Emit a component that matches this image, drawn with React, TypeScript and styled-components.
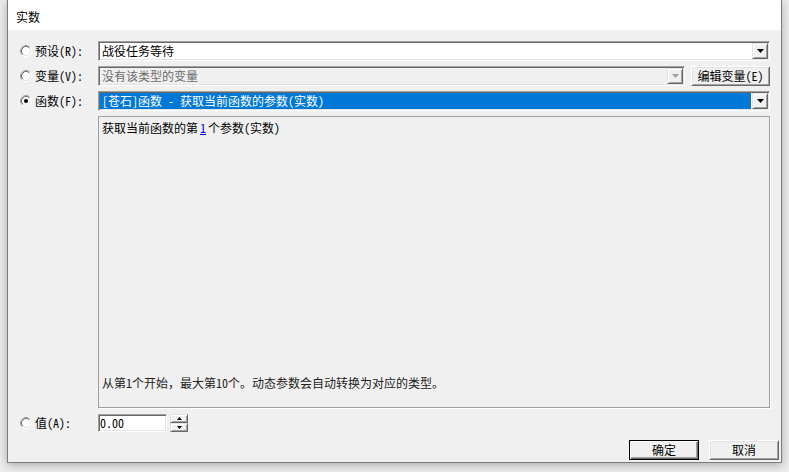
import React from "react";
import styled, { createGlobalStyle } from "styled-components";

const GlobalStyle = createGlobalStyle`
  html, body { margin: 0; padding: 0; background: #ececec; }
  body {
    font-family: "Noto Sans Mono CJK SC", "Noto Sans CJK SC", "Noto Sans", sans-serif;
    font-size: 12px;
    color: #000;
  }
  #root { width: 789px; height: 472px; overflow: hidden; }
  * { box-sizing: border-box; }
`;

const Desktop = styled.div`
  width: 789px;
  height: 472px;
  padding-left: 7px;
  background: #ececec;
`;

const Dialog = styled.div`
  width: 775px;
  height: 463px;
  border: 1px solid #7a7a7a;
  border-top: none;
  background: #f0f0f0;
  box-shadow: 0 2px 9px rgba(0, 0, 0, 0.28);
  display: flex;
  flex-direction: column;
`;

const TitleBar = styled.div`
  height: 30px;
  flex: none;
  background: #fff;
  padding: 3px 0 0 8px;
  display: flex;
  align-items: center;
  font-family: "Noto Sans CJK SC", sans-serif;
  font-size: 12px;
  color: #000;
`;

const Body = styled.div`
  flex: 1;
  padding: 11px 2px 1px 12px;
  display: flex;
  flex-direction: column;
`;

const FormGrid = styled.div`
  display: grid;
  grid-template-columns: 78px 1fr;
  grid-template-rows: 20px 20px 20px 292px 18px;
  row-gap: 5px;
  margin-right: 9px;
`;

const OptionLabel = styled.label<{ $offset?: number }>`
  display: flex;
  align-items: center;
  gap: 3px;
  font-size: 12px;
  line-height: 14px;
  white-space: nowrap;
  margin-top: ${(p) => p.$offset ?? 0}px;
`;

const ControlRow = styled.div`
  display: flex;
  gap: 6px;
  align-items: stretch;
`;

const sunken = `
  border-style: solid;
  border-width: 1px;
  border-color: #a0a0a0 #ffffff #ffffff #a0a0a0;
  box-shadow: inset 1px 1px 0 #696969, inset -1px -1px 0 #e3e3e3;
  padding: 1px;
`;

const Combo = styled.div<{ $disabled?: boolean }>`
  flex: 1;
  height: 20px;
  display: flex;
  align-items: stretch;
  ${sunken}
  background: ${(p) => (p.$disabled ? "#f0f0f0" : "#ffffff")};
`;

const ComboText = styled.div<{ $selected?: boolean; $disabled?: boolean }>`
  flex: 1;
  display: flex;
  align-items: center;
  padding-left: 2px;
  margin-right: 1px;
  font-size: 12px;
  line-height: 14px;
  white-space: pre;
  overflow: hidden;
  background: ${(p) => (p.$selected ? "#0078d7" : "transparent")};
  color: ${(p) => (p.$selected ? "#fff" : p.$disabled ? "#6d6d6d" : "#000")};
`;

const raised = `
  border-style: solid;
  border-width: 1px;
  border-color: #e3e3e3 #696969 #696969 #e3e3e3;
  box-shadow: inset 1px 1px 0 #ffffff, inset -1px -1px 0 #a0a0a0;
  background: #f0f0f0;
`;

const DropButton = styled.div`
  width: 16px;
  height: 16px;
  flex: none;
  ${raised}
  display: flex;
  align-items: center;
  justify-content: center;
`;

const PushButton = styled.button<{ $width: number; $default?: boolean }>`
  width: ${(p) => p.$width}px;
  height: 20px;
  padding: 0;
  font-family: inherit;
  font-size: 12px;
  line-height: 14px;
  color: #000;
  background: #f0f0f0;
  border-style: solid;
  border-width: 1px;
  border-color: ${(p) =>
    p.$default ? "#000 #000 #000 #000" : "#ffffff #696969 #696969 #ffffff"};
  box-shadow: ${(p) =>
    p.$default
      ? "inset 1px 1px 0 #ffffff, inset -1px -1px 0 #696969, inset -2px -2px 0 #a0a0a0"
      : "inset 1px 1px 0 #e3e3e3, inset -1px -1px 0 #a0a0a0"};
  display: flex;
  align-items: center;
  justify-content: center;
  flex: none;
`;

const DescBox = styled.div`
  border: 1px solid #a0a0a0;
  box-shadow: 1px 1px 0 #ffffff;
  background: #f0f0f0;
  padding: 3px 3px 16px 3px;
  display: flex;
  flex-direction: column;
  justify-content: space-between;
  font-size: 12px;
  line-height: 16px;
`;

const DescText = styled.div<{ $muted?: boolean }>`
  color: ${(p) => (p.$muted ? "#222" : "#000")};
  white-space: nowrap;
`;

const ParamLink = styled.span`
  color: #0000ee;
  text-decoration: underline;
  padding: 0 2px;
`;

const ValueRow = styled.div`
  display: flex;
  gap: 3px;
  margin-top: 1px;
`;

const NumberInput = styled.div`
  width: 69px;
  height: 18px;
  ${sunken}
  background: #fff;
  display: flex;
  align-items: center;
  font-size: 12px;
  line-height: 14px;
  padding-left: 1px;
`;

const Spinner = styled.div`
  width: 18px;
  height: 18px;
  display: flex;
  flex-direction: column;
`;

const SpinHalf = styled.div`
  flex: 1;
  ${raised}
  display: flex;
  align-items: center;
  justify-content: center;
`;

const ButtonRow = styled.div`
  display: flex;
  justify-content: flex-end;
  gap: 10px;
  margin-top: 9px;
`;

const Radio: React.FC<{ checked?: boolean }> = ({ checked }) => (
  <svg width="12" height="12" viewBox="0 0 12 12" style={{ flex: "none" }}>
    <circle cx="6" cy="6" r="4.5" fill="#fff" />
    <path d="M2.11 9.89 A5.5 5.5 0 0 1 9.89 2.11" fill="none" stroke="#a0a0a0" strokeWidth="1" />
    <path d="M9.89 2.11 A5.5 5.5 0 0 1 2.11 9.89" fill="none" stroke="#ffffff" strokeWidth="1" />
    <path d="M2.82 9.18 A4.5 4.5 0 0 1 9.18 2.82" fill="none" stroke="#696969" strokeWidth="1" />
    <path d="M9.18 2.82 A4.5 4.5 0 0 1 2.82 9.18" fill="none" stroke="#e3e3e3" strokeWidth="1" />
    {checked && <circle cx="6" cy="6" r="2" fill="#000" />}
  </svg>
);

const DownArrow: React.FC<{ disabled?: boolean }> = ({ disabled }) => (
  <svg width="7" height="4" viewBox="0 0 7 4">
    <polygon points="0,0 7,0 3.5,4" fill={disabled ? "#a0a0a0" : "#000"} />
  </svg>
);

const SmallArrow: React.FC<{ up?: boolean }> = ({ up }) => (
  <svg width="5" height="3" viewBox="0 0 5 3">
    <polygon points={up ? "0,3 5,3 2.5,0" : "0,0 5,0 2.5,3"} fill="#000" />
  </svg>
);

export default function App() {
  return (
    <>
      <GlobalStyle />
      <Desktop>
        <Dialog>
          <TitleBar>实数</TitleBar>
          <Body>
            <FormGrid>
              <OptionLabel>
                <Radio />
                预设(R):
              </OptionLabel>
              <ControlRow>
                <Combo>
                  <ComboText>战役任务等待</ComboText>
                  <DropButton>
                    <DownArrow />
                  </DropButton>
                </Combo>
              </ControlRow>

              <OptionLabel>
                <Radio />
                变量(V):
              </OptionLabel>
              <ControlRow>
                <Combo $disabled>
                  <ComboText $disabled>没有该类型的变量</ComboText>
                  <DropButton>
                    <DownArrow disabled />
                  </DropButton>
                </Combo>
                <PushButton $width={79}>编辑变量(E)</PushButton>
              </ControlRow>

              <OptionLabel>
                <Radio checked />
                函数(F):
              </OptionLabel>
              <ControlRow>
                <Combo>
                  <ComboText $selected>[苍石]函数 - 获取当前函数的参数(实数)</ComboText>
                  <DropButton>
                    <DownArrow />
                  </DropButton>
                </Combo>
              </ControlRow>

              <div />
              <DescBox>
                <DescText>
                  获取当前函数的第<ParamLink>1</ParamLink>个参数(实数)
                </DescText>
                <DescText $muted>
                  从第1个开始，最大第10个。动态参数会自动转换为对应的类型。
                </DescText>
              </DescBox>

              <OptionLabel $offset={1}>
                <Radio />
                值(A):
              </OptionLabel>
              <ValueRow>
                <NumberInput>0.00</NumberInput>
                <Spinner>
                  <SpinHalf>
                    <SmallArrow up />
                  </SpinHalf>
                  <SpinHalf>
                    <SmallArrow />
                  </SpinHalf>
                </Spinner>
              </ValueRow>
            </FormGrid>
            <ButtonRow>
              <PushButton $width={70} $default>
                确定
              </PushButton>
              <PushButton $width={70}>取消</PushButton>
            </ButtonRow>
          </Body>
        </Dialog>
      </Desktop>
    </>
  );
}
